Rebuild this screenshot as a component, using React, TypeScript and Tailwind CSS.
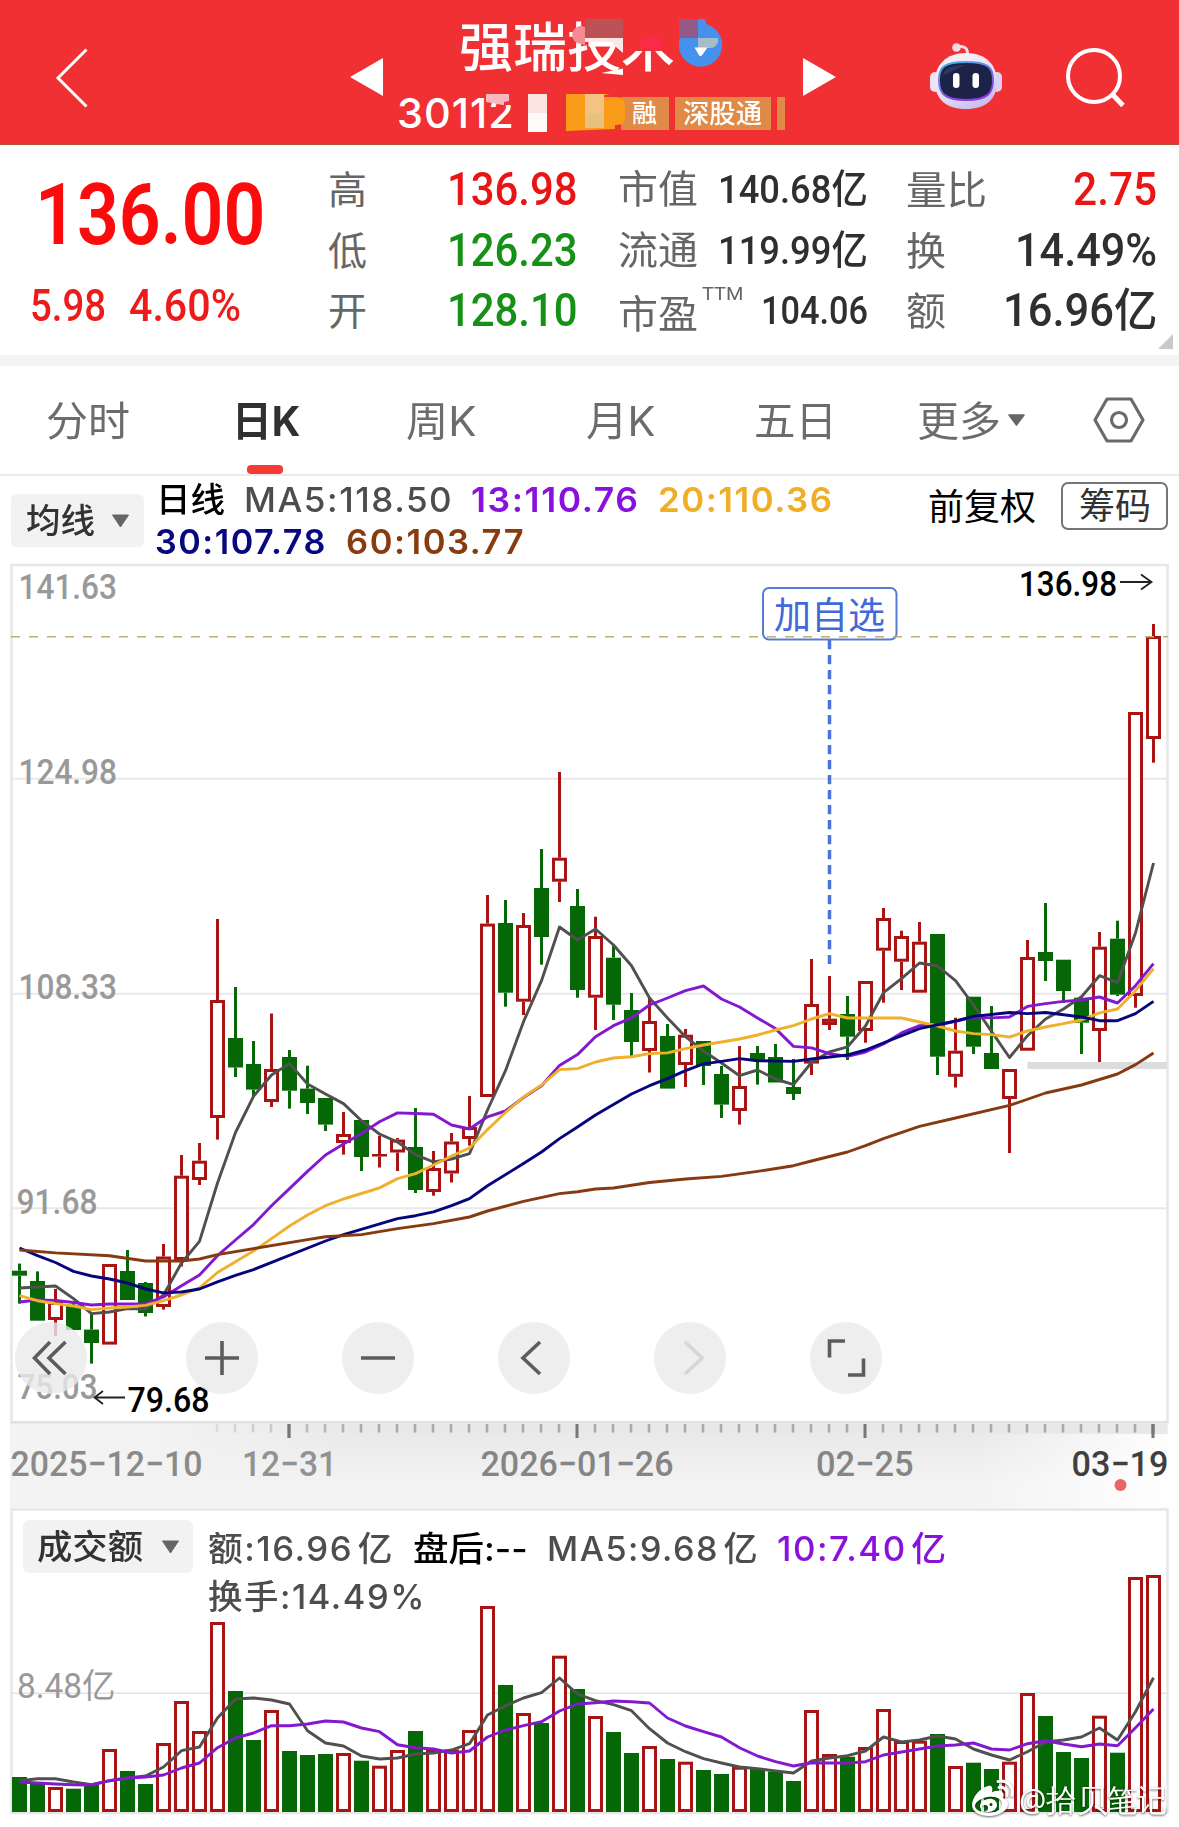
import { useLayoutEffect, useRef, type ReactNode } from "react";

/* Scales a single line of text horizontally so that it fills its column. */
function Fit({ className = "", children }: { className?: string; children: ReactNode }) {
  const box = useRef<HTMLDivElement>(null);
  const inner = useRef<HTMLSpanElement>(null);
  useLayoutEffect(() => {
    const b = box.current;
    const t = inner.current;
    if (b && t && t.offsetWidth > 0) {
      t.style.transform = `scaleX(${b.clientWidth / t.offsetWidth})`;
    }
  }, []);
  return (
    <div ref={box} className={`shrink-0 whitespace-nowrap ${className}`}>
      <span ref={inner} className="inline-block origin-left">
        {children}
      </span>
    </div>
  );
}

const DIN = "font-['Roboto','Noto_Sans_CJK_SC',sans-serif]";
const SF = "font-['Inter','Noto_Sans_CJK_SC',sans-serif]";

const RED = "#a81414";
const GREEN = "#056705";
const STEP = 18;
const X0 = 19.5;
const cx = (i: number) => X0 + STEP * i;

/* direction, high, body top, body bottom, low */
type Candle = [string, number, number, number, number];
const candles: Candle[] = [
  ["g", 1263.6, 1270.7, 1275.7, 1303.6], ["g", 1271.4, 1281, 1320.7, 1320.7], ["r", 1289, 1302, 1320, 1335.7],
  ["g", 1303, 1305.5, 1330, 1330], ["g", 1313.6, 1329.6, 1343, 1363.6], ["r", 1264, 1264, 1344.6, 1344.6],
  ["g", 1250, 1271, 1300, 1300], ["g", 1282, 1283, 1313, 1316.5], ["r", 1244, 1256.5, 1307, 1309.6],
  ["r", 1155, 1175.7, 1260, 1266.5], ["r", 1143, 1160.7, 1180, 1185], ["r", 919, 1000, 1118, 1139.6],
  ["g", 987, 1038, 1067.5, 1077], ["g", 1041, 1064, 1089.6, 1096], ["r", 1013.5, 1069, 1102, 1107],
  ["g", 1050, 1057, 1090.7, 1108.6], ["g", 1065.7, 1088.6, 1103, 1114], ["g", 1098, 1098, 1124.6, 1131],
  ["r", 1112, 1134, 1143, 1154.6], ["g", 1120, 1120, 1157, 1171], ["r", 1135.7, 1154, 1156.5, 1167.5],
  ["r", 1138, 1139.6, 1152.5, 1171], ["g", 1108, 1147, 1190, 1193], ["r", 1151, 1168, 1192, 1195.7],
  ["r", 1133, 1141.5, 1173.5, 1182.5], ["r", 1096, 1127, 1139, 1145.7], ["r", 895, 923.6, 1097, 1097],
  ["g", 900, 923, 992.7, 1006.7], ["r", 913, 925, 1001.7, 1015], ["g", 849, 888, 937, 964.7],
  ["r", 772, 857.7, 881.7, 902], ["g", 889, 906, 990, 997.7], ["r", 916.7, 936, 997.7, 1030],
  ["g", 946, 957.7, 1004.7, 1020], ["g", 993, 1010, 1042, 1057], ["r", 997, 1021, 1051, 1072.5],
  ["g", 1024, 1036, 1088.6, 1088.6], ["r", 1029, 1034.7, 1065, 1087], ["g", 1041, 1041, 1066, 1085],
  ["g", 1066, 1074, 1104.6, 1118], ["r", 1046, 1086, 1111, 1124.6], ["g", 1046, 1053, 1061, 1084.6],
  ["g", 1044, 1057, 1082.5, 1082.5], ["g", 1059, 1087, 1094, 1100], ["r", 959, 1004, 1063.6, 1075],
  ["r", 976, 1018.7, 1025, 1030], ["g", 996, 1014, 1036.7, 1060], ["r", 981, 981, 1031, 1042.7],
  ["r", 908, 918, 950.7, 1002.7], ["r", 930.7, 936, 961.7, 990], ["r", 922, 941.7, 992.7, 992.7],
  ["g", 934, 934, 1056.7, 1075], ["r", 1017.7, 1050.7, 1076.8, 1087.5], ["g", 996.7, 996.7, 1046.7, 1054],
  ["g", 1006, 1053, 1069, 1069], ["r", 1069, 1069, 1099, 1153], ["r", 940, 957, 1050.7, 1050.7],
  ["g", 903, 952, 961, 981], ["g", 959.7, 959.7, 991, 1003], ["g", 997.7, 997.7, 1022.7, 1054],
  ["r", 932, 946.7, 1031, 1062], ["g", 920.7, 938.7, 994.7, 996], ["r", 712, 712, 996, 1007.7],
  ["r", 624, 636, 739, 762.7],
];

const volumeTops = [
  1777, 1784, 1787, 1788.7, 1785, 1749, 1771, 1784, 1743, 1701, 1731, 1622, 1691, 1740, 1710, 1751, 1755, 1754, 1753,
  1760.7, 1765.7, 1750, 1731, 1749, 1749.5, 1730, 1606, 1685, 1713, 1723, 1655.7, 1689, 1716, 1732, 1753, 1746, 1759,
  1761.7, 1770, 1774, 1766.7, 1769, 1771.7, 1781, 1710, 1754, 1756.7, 1747, 1709, 1741, 1740.7, 1734, 1766, 1762.7,
  1769, 1761.7, 1693, 1716, 1752, 1758, 1715.7, 1752.7, 1577, 1575,
];

type Series = [number, number][];
const seq = (v: number[]): Series => v.map((y, i) => [i, y]);
const pts = (s: Series) => s.map(([i, y]) => `${cx(i)},${y}`).join(" ");

const ma5 = seq([
  1288, 1287, 1286, 1298.6, 1313.6, 1312, 1308.6, 1309, 1295, 1263, 1241.4, 1183, 1132.5, 1096.4, 1075, 1063.6, 1084,
  1094, 1103.6, 1120.7, 1134, 1142, 1154.6, 1162, 1159, 1153.6, 1110, 1070.7, 1021.7, 980.7, 927, 940, 929, 945, 965.7,
  998, 1018, 1036.7, 1051, 1063, 1075.7, 1070, 1079, 1084.6, 1062.5, 1051.8, 1046.8, 1026, 992.7, 978.7, 963, 966,
  980.7, 1005, 1031.4, 1057.5, 1035.7, 1019, 1009, 996.7, 975.7, 982.7, 933, 863,
]);
const ma13 = seq([
  1302, 1300, 1300.4, 1302.5, 1305, 1304, 1304, 1303.6, 1297, 1285.7, 1275, 1255.7, 1240, 1224.6, 1205.7, 1188.6,
  1171.4, 1155, 1144, 1133.6, 1121.8, 1112.9, 1113.5, 1114.3, 1125, 1129, 1116.8, 1111, 1097.5, 1085.7, 1065.4, 1054.6,
  1036.8, 1025.7, 1017.9, 1005, 998, 990.7, 986, 999, 1007, 1017.9, 1028.6, 1046.4, 1047.9, 1053.6, 1056.4, 1052, 1044,
  1032.9, 1025.7, 1025, 1021.4, 1017, 1017.9, 1017, 1006.4, 1003.6, 1001.4, 1000, 997, 1003, 985.7, 963.6,
]);
const ma20 = seq([
  1295.7, 1300.7, 1303.6, 1306, 1309.6, 1308, 1307, 1305.4, 1300.7, 1295, 1287.9, 1272.5, 1261.8, 1251, 1238.6, 1226,
  1215, 1205.7, 1199, 1193.5, 1187.9, 1178.6, 1173.6, 1165, 1156, 1148, 1129.6, 1112.5, 1097, 1085, 1069.6, 1068.6,
  1062, 1058, 1056.8, 1053.6, 1052.9, 1048.6, 1045, 1042, 1039, 1035, 1030, 1025.7, 1019, 1013.6, 1018, 1018, 1018,
  1018, 1022, 1026, 1031, 1033.6, 1034.6, 1037, 1031, 1027, 1023.6, 1020, 1012.9, 1009, 990.7, 968.6,
]);
const ma30: Series = [
  [0, 1248], [1, 1255.7], [2, 1262.5], [3, 1271.4], [4, 1276], [5, 1279], [6, 1283], [7, 1289], [8, 1292.9], [9, 1292],
  [10, 1289], [11, 1281.8], [12, 1275.4], [13, 1269.6], [17, 1241], [18, 1234.6], [21, 1218.6], [22, 1215.7],
  [23, 1211.8], [24, 1205.7], [25, 1198.6], [26, 1185.7], [28, 1163.6], [29, 1152], [30, 1138.6], [31, 1127],
  [32, 1115], [33, 1104.6], [34, 1094], [35, 1085.7], [36, 1078.6], [37, 1070.7], [38, 1063.9], [39, 1061.4],
  [40, 1058.6], [41, 1060.7], [43, 1061.4], [44, 1059], [46, 1055], [47, 1050], [50, 1028.6], [52, 1021], [53, 1016.4],
  [55, 1012.5], [56, 1013.6], [57, 1012.5], [59, 1017], [60, 1020.7], [61, 1020.7], [62, 1013.6], [63, 1001.4],
];
const ma60: Series = [
  [0, 1250], [2, 1252.9], [5, 1255.7], [7, 1261], [9, 1261], [10, 1259], [11, 1254.6], [16, 1239.6], [17, 1236.8],
  [19, 1234.6], [21, 1228.6], [23, 1223.6], [25, 1217], [26, 1211], [28, 1201.4], [30, 1193.6], [31, 1191.8],
  [32, 1189], [33, 1188], [35, 1182.5], [37, 1179], [39, 1176.4], [41, 1171.4], [43, 1165.7], [44, 1161], [46, 1152],
  [47, 1145.7], [48, 1138.6], [50, 1126.4], [52, 1118], [55, 1105.4], [57, 1093], [59, 1085], [61, 1074], [62, 1064.6],
  [63, 1053],
];
const vma5 = seq([
  1780.7, 1778.7, 1778.7, 1782, 1784.7, 1780.7, 1778, 1776, 1767, 1750.7, 1747, 1718, 1699, 1698, 1700, 1704, 1730.7,
  1743, 1746, 1756, 1759, 1758, 1754, 1753, 1750, 1743.7, 1715, 1705.7, 1698, 1692.7, 1678, 1694, 1700.7, 1704.7,
  1710.7, 1728.7, 1743, 1751.7, 1758.7, 1763, 1767, 1768.7, 1771, 1773, 1761, 1758, 1755.7, 1751, 1737, 1742, 1740,
  1736, 1739, 1749, 1755, 1760, 1751.7, 1742, 1740, 1737, 1728, 1740, 1711.7, 1677.7,
]);
const vma10 = seq([
  1782, 1783, 1784, 1784.7, 1785, 1780.7, 1778, 1777, 1775, 1768, 1763, 1747.7, 1738, 1733, 1725.7, 1725.7, 1724, 1721,
  1722, 1728, 1731.7, 1744.7, 1747.7, 1749, 1753, 1751, 1737, 1730, 1725.7, 1721.7, 1711, 1704, 1702.7, 1701, 1701.7,
  1703, 1718, 1726, 1731.7, 1737, 1747.7, 1756, 1761.7, 1766, 1762.7, 1763, 1763, 1761.7, 1755, 1752, 1749, 1746, 1745,
  1743, 1749, 1750, 1743.7, 1740.7, 1744, 1746.7, 1744, 1745.7, 1727.7, 1709,
]);

function Label(p: { x: number; y: number; w: number; fill: string; children: string; size?: number }) {
  return (
    <text
      x={p.x}
      y={p.y}
      textLength={p.w}
      lengthAdjust="spacingAndGlyphs"
      fill={p.fill}
      fontSize={p.size ?? 35.5}
      fontWeight={500}
    >
      {p.children}
    </text>
  );
}

function Line({ s, color }: { s: Series; color: string }) {
  return <polyline points={pts(s)} fill="none" stroke={color} strokeWidth={2.9} strokeLinejoin="round" />;
}

function PriceChart() {
  return (
    <svg className={`block ${DIN}`} width="1179" height="948" viewBox="0 560 1179 948">
      <defs>
        <linearGradient id="axisTop" x1="0" x2="0" y1="0" y2="1">
          <stop offset="0" stopColor="#e7e7e7" />
          <stop offset="1" stopColor="#f3f3f3" />
        </linearGradient>
        <linearGradient id="fadeRight" x1="0" x2="1" y1="0" y2="0">
          <stop offset="0" stopColor="#fff" stopOpacity="0" />
          <stop offset="1" stopColor="#fff" stopOpacity="1" />
        </linearGradient>
        <linearGradient id="fadeLeft" x1="0" x2="1" y1="0" y2="0">
          <stop offset="0" stopColor="#f3f3f3" stopOpacity="1" />
          <stop offset="0.4" stopColor="#f3f3f3" stopOpacity="1" />
          <stop offset="1" stopColor="#f3f3f3" stopOpacity="0" />
        </linearGradient>
      </defs>

      <rect x="11.5" y="565" width="1156" height="857" fill="#fff" stroke="#e6e6e6" strokeWidth="2.5" />
      {[778.7, 993.7, 1208.3].map((y) => (
        <line key={y} x1="12" x2="1167" y1={y} y2={y} stroke="#e9e9e9" strokeWidth="2" />
      ))}

      <g>
        <Label x={18.5} y={599} w={98.5} fill="#999">141.63</Label>
        <Label x={18.5} y={784} w={98.5} fill="#999">124.98</Label>
        <Label x={18.5} y={998.7} w={98.5} fill="#999">108.33</Label>
        <Label x={16.5} y={1213.6} w={81} fill="#999">91.68</Label>
        <Label x={17.5} y={1398.6} w={80} fill="#999">75.03</Label>
      </g>

      <rect x="1027.5" y="1062" width="139.5" height="7" fill="#dcdcdc" />

      <rect x="763" y="588" width="133.5" height="51.5" rx="6" fill="#fff" stroke="#5a7bd2" strokeWidth="2" />
      <text x="774" y="629" textLength="111" lengthAdjust="spacingAndGlyphs" fill="#4169d8" fontSize="37">加自选</text>
      <line x1="829.5" x2="829.5" y1="640" y2="964" stroke="#4a74dc" strokeWidth="3.5" strokeDasharray="9.3 5.7" />

      {candles.map(([d, hi, top, bot, lo], i) => {
        const x = cx(i);
        const c = d === "r" ? RED : GREEN;
        return (
          <g key={i} stroke={c}>
            {hi < top && <line x1={x} x2={x} y1={hi} y2={top} strokeWidth="3" />}
            {lo > bot && <line x1={x} x2={x} y1={bot} y2={lo} strokeWidth="3" />}
            {d === "g" || bot - top < 4 ? (
              <rect x={x - 7.5} y={top} width="15" height={bot - top} fill={c} stroke="none" />
            ) : (
              <rect
                x={x - 6}
                y={top + 1.5}
                width="12"
                height={bot - top - 3}
                fill={i === 45 ? "#f06060" : "#fff"}
                strokeWidth="3"
              />
            )}
          </g>
        );
      })}
      <line x1="11" x2="1168" y1="636.7" y2="636.7" stroke="#c0b06e" strokeWidth="1.6" strokeDasharray="9 9" />

      <Line s={ma5} color="#505050" />
      <Line s={ma13} color="#8318cf" />
      <Line s={ma20} color="#efb02c" />
      <Line s={ma30} color="#06067c" />
      <Line s={ma60} color="#853a12" />

      <Label x={1019} y={595.5} w={98} fill="#000">136.98</Label>
      <path d="M1120 582h31M1141 574.5l10.500 7.500l-10.500 7.500" fill="none" stroke="#222" strokeWidth="1.8" />
      <Label x={127.5} y={1411.5} w={82} fill="#000">79.68</Label>
      <path d="M125 1397.5H94.5M103 1391l-8.5 6.5l8.5 6.5" fill="none" stroke="#222" strokeWidth="1.8" />

      <rect x="10" y="1424" width="1157.5" height="84" fill="#f3f3f3" />
      <rect x="10" y="1424" width="1157.5" height="60" fill="url(#axisTop)" />
      {candles.map((_, i) =>
        i < 11 ? null : [15, 31, 47, 63].includes(i) ? (
          <line key={i} x1={cx(i) - 0.5} x2={cx(i) - 0.5} y1="1424" y2="1438" stroke="#777" strokeWidth="3" />
        ) : (
          <line key={i} x1={cx(i) - 0.5} x2={cx(i) - 0.5} y1="1424" y2="1432.5" stroke="#aaa" strokeWidth="2.6" />
        ),
      )}
      <rect x="10" y="1424" width="350" height="84" fill="url(#fadeLeft)" />
      <rect x="967" y="1434" width="212" height="74" fill="url(#fadeRight)" />
      <line x1={cx(15) - 0.5} x2={cx(15) - 0.5} y1="1424" y2="1438" stroke="#777" strokeWidth="3" />
      <line x1={cx(63) - 0.5} x2={cx(63) - 0.5} y1="1424" y2="1438" stroke="#777" strokeWidth="3" />
      <line x1="10" x2="1168" y1="1422.5" y2="1422.5" stroke="#e0e0e0" strokeWidth="2" />
      <Label x={10.5} y={1476} w={192} fill="#8a8a8a">2025−12−10</Label>
      <Label x={242} y={1475.5} w={95} fill="#929292">12−31</Label>
      <Label x={480.5} y={1475.5} w={193} fill="#858585">2026−01−26</Label>
      <Label x={816} y={1475.5} w={97.5} fill="#858585">02−25</Label>
      <Label x={1071.5} y={1475.5} w={97} fill="#3f3f3f">03−19</Label>
      <circle cx="1120.5" cy="1485" r="6" fill="#ea6464" />
    </svg>
  );
}

function VolumeChart() {
  return (
    <svg className={`absolute inset-0 ${DIN}`} width="1179" height="319" viewBox="0 1508 1179 319">
      <rect x="11.5" y="1509.5" width="1156" height="303.5" fill="#fff" stroke="#e6e6e6" strokeWidth="2.5" />
      <line x1="12" x2="1167" y1="1693.3" y2="1693.3" stroke="#e3e3e3" strokeWidth="1.4" />
      <text x="17" y="1698" textLength="98.5" lengthAdjust="spacingAndGlyphs" fill="#999" fontSize="34.5">8.48亿</text>
      {volumeTops.map((t, i) =>
        candles[i][0] === "g" ? (
          <rect key={i} x={cx(i) - 7.5} y={t} width="15" height={1812 - t} fill={GREEN} />
        ) : (
          <rect key={i} x={cx(i) - 6} y={t + 1.5} width="12" height={1812 - t - 3} fill="#fff" stroke={RED} strokeWidth="3" />
        ),
      )}
      <Line s={vma5} color="#505050" />
      <Line s={vma10} color="#8318cf" />
    </svg>
  );
}

function Watermark() {
  return (
    <div className="absolute right-[11px] bottom-[8px] flex items-center gap-[4px] text-white drop-shadow-[0_1px_1px_rgba(0,0,0,0.6)]">
      <svg width="44" height="40" viewBox="0 0 44 40">
        <path
          fill="#fff"
          fillRule="evenodd"
          d="M17 7C9 9 1 18 1 26c0 7 8 11 17 11 11 0 19-6 19-12 0-4-3-5-5-6 1-3 1-5-1-6-2-2-6-1-10 0 1-4 0-7-4-6zM17 18c8-1 14 2 14 7s-6 9-13 9-14-3-14-7 6-8 13-9z"
        />
        <path fill="#fff" fillRule="evenodd" d="M17 20c5-1 9 2 9 6s-4 7-9 7-8-3-8-6 3-6 8-7zm-3 6a3 3 0 100 6 3 3 0 000-6zm6-2a1.500 1.500 0 100 3 1.500 1.500 0 000-3z" />
        <path d="M28 8.500c5-1 9 3 8 8M27 2.500c9-2 16 5 14 14" fill="none" stroke="#fff" strokeWidth="3" strokeLinecap="round" />
      </svg>
      <Fit className="h-[38px] w-[149px] text-[31px] leading-[38px]">@拾贝笔记</Fit>
    </div>
  );
}

function Robot() {
  return (
    <svg className="ml-[93px]" width="74" height="68" viewBox="0 0 74 68">
      <defs>
        <linearGradient id="shell" x1="0.3" x2="0.8" y1="0" y2="1">
          <stop offset="0" stopColor="#fdf1f6" />
          <stop offset="0.55" stopColor="#e6ddf2" />
          <stop offset="1" stopColor="#c4b8f0" />
        </linearGradient>
        <linearGradient id="visorEdge" x1="0" x2="0.4" y1="0" y2="1">
          <stop offset="0" stopColor="#46b7ea" />
          <stop offset="1" stopColor="#8a3be8" />
        </linearGradient>
      </defs>
      <path d="M28 5c7-2 11 1 10.500 8" fill="none" stroke="#f3dfe8" strokeWidth="3" />
      <circle cx="27.500" cy="5.500" r="4.300" fill="#f9d9e2" />
      <rect x="1" y="30" width="10" height="20" rx="5" fill="#efe3f2" />
      <rect x="63" y="30" width="10" height="20" rx="5" fill="#ddd0f2" />
      <path d="M37 11c20 0 31 12 31 29S57 67 37 67 6 57 6 40s11-29 31-29z" fill="url(#shell)" />
      <path d="M37 20c22 0 27 5 27 18S59 58 37 58 10 51 10 38s5-18 27-18z" fill="#1d2347" stroke="url(#visorEdge)" strokeWidth="2" />
      <path d="M14 33c2-8 10-10 22-10-8 3-14 8-22 10z" fill="#2c3760" />
      <rect x="24" y="31" width="6.500" height="15" rx="3.200" fill="#fff" />
      <rect x="43.500" y="31" width="6.500" height="15" rx="3.200" fill="#fff" />
    </svg>
  );
}

function Header() {
  return (
    <header className="flex h-[145px] items-start border-b border-[#b5533f] bg-[#f13034]">
      <svg className="mt-[47px] ml-[54px]" width="36" height="62" viewBox="0 0 36 62">
        <path d="M32.500 2.500L4 31l28.500 28.500" fill="none" stroke="#fff" strokeWidth="3" />
      </svg>
      <svg className="mt-[58px] ml-[260px]" width="33" height="38" viewBox="0 0 33 38">
        <path d="M33 0v38L0 19z" fill="#fff" />
      </svg>

      <div className={`relative h-[144px] w-[420px] text-white ${SF}`}>
        <div className="ml-[76px] pt-[16px]">
          <Fit className="h-[64px] w-[216px] text-[53px] leading-[64px] font-medium">强瑞技术</Fit>
        </div>
        <div className="mt-[12px] ml-[14px] flex h-[42px] items-center">
          <Fit className="h-[42px] w-[118px] text-[41.5px] leading-[42px] font-medium tracking-[1px]">30112</Fit>
          <div className="mt-[1px] ml-[106px] flex h-[33px] gap-[6px] text-[26px] leading-[33px] font-medium">
            <div className="w-[48px] bg-[#e08a48] pl-[11px] text-[25px]">融</div>
            <div className="w-[96px] bg-[#e08a48] pl-[8px]">
              <Fit className="w-[79px]">深股通</Fit>
            </div>
            <div className="w-[8px] bg-[#e08a48]" />
          </div>
        </div>
        <svg className="absolute inset-0" width="420" height="144" viewBox="383 0 420 144">
          <rect x="623" y="17" width="56" height="34" fill="#f13034" />
          <rect x="641" y="38" width="21" height="12" fill="#fa2a48" />
          <path d="M585 27a8.500 8.500 0 00-8 16l8 2z" fill="#f78b93" />
          <rect x="585" y="19" width="38" height="19" fill="#bd5256" />
          <path d="M585 38h38v15l-7-6-4-5h-27z" fill="#fde7e6" />
          <path d="M601 73l22-4.500V75z" fill="#fff" />
          <circle cx="700.500" cy="45" r="21.700" fill="#4691ee" />
          <rect x="679" y="19" width="19" height="19" fill="#935987" />
          <path d="M698 19h7l2 8-9 1z" fill="#4691ee" />
          <path d="M698 38h20v4q-2 6-8 6h-12z" fill="#a5bcc9" />
          <path d="M694.500 47.500h13l-6 8.500h-2z" fill="#fff" />
          <path d="M486 94h23v10l-6 1-17-3z" fill="#f8b9c0" />
          <path d="M509 93h9v12l-14 0v-3l5-1z" fill="#f13034" />
          <rect x="528" y="94" width="19" height="19" fill="#fde4e1" />
          <rect x="528" y="113" width="19" height="19" fill="#fffafa" />
          <path d="M566 94h44l-14 3h20q8 0 9 8v15q-1 5-10 5v4l-49 2z" fill="#fb9c18" />
          <rect x="585" y="94" width="19" height="19" fill="#f4c384" />
          <rect x="585" y="113" width="19" height="15" fill="#e8c27d" />
        </svg>
      </div>

      <svg className="mt-[58px]" width="33" height="38" viewBox="0 0 33 38">
        <path d="M0 0v38l33-19z" fill="#fff" />
      </svg>
      <div className="mt-[42px] flex">
        <Robot />
      </div>
      <svg className="mt-[46px] ml-[61px]" width="62" height="64" viewBox="0 0 62 64">
        <circle cx="30" cy="30" r="26" fill="none" stroke="#fff" strokeWidth="4" />
        <path d="M48.500 48.500L59 59.500" stroke="#fff" strokeWidth="5" />
      </svg>
    </header>
  );
}

function Stats() {
  return (
    <section className={`relative flex h-[210px] bg-white font-medium text-[#2f2f2f] ${DIN}`}>
      <div className="w-[328px] pt-[23px] text-[#fb0b0b]">
        <Fit className="ml-[35px] h-[96px] w-[230px] text-[84.500px] leading-[96px] font-semibold">136.00</Fit>
        <div className="mt-[19px] flex h-[46px] text-[44.500px] leading-[46px] text-[#ec1c1c]">
          <Fit className="ml-[30px] w-[76px]">5.98</Fit>
          <Fit className="ml-[23px] w-[112px]">4.60%</Fit>
        </div>
      </div>

      <div className="grid w-[250px] grid-rows-[61px_60px_60px] pt-[14px] text-[46px] leading-[60px]">
        {[
          ["高", "136.98", "text-[#e91414]"],
          ["低", "126.23", "text-[#159215]"],
          ["开", "128.10", "text-[#159215]"],
        ].map(([k, v, c]) => (
          <div key={k} className="flex">
            <Fit className="mt-[2px] w-[39px] text-[39px] font-normal text-[#666]">{k}</Fit>
            <Fit className={`ml-[80px] w-[131px] ${c}`}>{v}</Fit>
          </div>
        ))}
      </div>

      <div className="ml-[40px] grid w-[250px] grid-rows-[61px_60px_60px] pt-[14px] leading-[61px]">
        <div className="flex">
          <Fit className="mt-[1px] w-[80px] text-[39px] font-normal text-[#666]">市值</Fit>
          <Fit className="ml-[20px] w-[150px] text-[39.500px]">140.68亿</Fit>
        </div>
        <div className="flex">
          <Fit className="mt-[1px] w-[80px] text-[39px] font-normal text-[#666]">流通</Fit>
          <Fit className="ml-[20px] w-[150px] text-[39.500px]">119.99亿</Fit>
        </div>
        <div className="flex">
          <Fit className="mt-[5px] w-[80px] text-[39px] font-normal text-[#666]">市盈</Fit>
          <Fit className="-mt-[17px] ml-[4px] w-[41px] text-[18px] font-normal text-[#666]">TTM</Fit>
          <Fit className="ml-[18px] w-[107px] text-[38.500px]">104.06</Fit>
        </div>
      </div>

      <div className="ml-[38px] grid w-[251px] grid-rows-[61px_60px_60px] pt-[14px] text-[46px] leading-[60px]">
        <div className="flex justify-between">
          <Fit className="mt-[2px] w-[81px] text-[39px] font-normal text-[#666]">量比</Fit>
          <Fit className="w-[84px] text-[#ea1515]">2.75</Fit>
        </div>
        <div className="flex justify-between">
          <Fit className="mt-[2px] w-[40px] text-[39px] font-normal text-[#666]">换</Fit>
          <Fit className="w-[142px]">14.49%</Fit>
        </div>
        <div className="flex justify-between">
          <Fit className="mt-[2px] w-[40px] text-[39px] font-normal text-[#666]">额</Fit>
          <Fit className="w-[154px]">16.96亿</Fit>
        </div>
      </div>
      <svg className="absolute right-[6px] bottom-[6px]" width="15" height="15" viewBox="0 0 15 15">
        <path d="M15 0v15H0z" fill="#c9c9c9" />
      </svg>
    </section>
  );
}

function Tabs() {
  return (
    <nav className={`flex h-[110px] items-start border-b-2 border-[#ebebeb] bg-white text-[41px] leading-[111px] text-[#6c6c6c] ${SF}`}>
      <Fit className="ml-[46px] w-[84px]">分时</Fit>
      <div className="relative ml-[102px] h-[108px]">
        <Fit className="w-[69px] font-bold text-[#303030]">日K</Fit>
        <div className="absolute bottom-0 left-[15px] h-[9px] w-[36px] rounded-[4px] bg-[#f63b33]" />
      </div>
      <Fit className="ml-[105px] w-[71px]">周K</Fit>
      <Fit className="ml-[109px] w-[70px]">月K</Fit>
      <Fit className="ml-[98px] w-[83px]">五日</Fit>
      <Fit className="ml-[80px] w-[84px]">更多</Fit>
      <svg className="mt-[48px] ml-[6px]" width="19" height="12" viewBox="0 0 19 12">
        <path d="M2 1h15l-7.500 10z" fill="#666" stroke="#666" strokeWidth="1.5" strokeLinejoin="round" />
      </svg>
      <svg className="mt-[30px] ml-[67px]" width="52" height="48" viewBox="0 0 52 48">
        <path d="M14 3h24l12 21-12 21H14L2 24z" fill="none" stroke="#6a6a6a" strokeWidth="3.2" strokeLinejoin="round" />
        <circle cx="26" cy="24" r="7.500" fill="none" stroke="#6a6a6a" strokeWidth="3.2" />
      </svg>
    </nav>
  );
}

function Caret() {
  return (
    <svg width="19" height="14" viewBox="0 0 19 14">
      <path d="M1.500 1h16l-8 12z" fill="#666" stroke="#666" strokeWidth="1" strokeLinejoin="round" />
    </svg>
  );
}

function MaBar() {
  return (
    <section className={`flex h-[84px] bg-white text-[34px] leading-[42px] font-medium ${SF}`}>
      <div className="mt-[18px] ml-[11px] flex h-[53px] w-[133px] items-center rounded-[6px] bg-[#f2f2f2] pl-[15px] text-[#333]">
        <Fit className="mr-[16px] w-[69px]">均线</Fit>
        <Caret />
      </div>
      <div className="ml-[12px] w-[740px] pt-[3px]">
        <div className="flex h-[42px] tracking-[1.500px]">
          <Fit className="w-[69px] tracking-normal text-black">日线</Fit>
          <Fit className="ml-[19px] w-[209px] text-[#4d4d4d]">MA5:118.50</Fit>
          <Fit className="ml-[18px] w-[169px] font-semibold text-[#8811dc]">13:110.76</Fit>
          <Fit className="ml-[18px] w-[176px] font-semibold text-[#efae25]">20:110.36</Fit>
        </div>
        <div className="flex h-[42px] font-semibold tracking-[1.500px]">
          <Fit className="-ml-[1px] w-[172px] text-[#080880]">30:107.78</Fit>
          <Fit className="ml-[19px] w-[179px] text-[#893b10]">60:103.77</Fit>
        </div>
      </div>
      <Fit className="mt-[9px] ml-[32px] w-[108px] text-[36px] leading-[44px] font-normal text-black">前复权</Fit>
      <div className="mt-[6px] ml-[25px] h-[48px] w-[107px] rounded-[7px] border-2 border-[#757575] pl-[16px] leading-[45px] font-normal text-[#333]">
        <Fit className="w-[72px] text-[36px]">筹码</Fit>
      </div>
    </section>
  );
}

const btnIcons: [string, string][] = [
  ["M35 20L19.500 36l15.500 16M50.500 20L34 36l16.500 16", "#5c5c5c"],
  ["M19 36h34M36 19v34", "#5c5c5c"],
  ["M19 36h34", "#5c5c5c"],
  ["M42 20L25 36l17 16", "#5c5c5c"],
  ["M31 20l17 16-17 16", "#d6d6d6"],
  ["M19.500 35.500V19H35M53.500 36.500V53H38", "#5c5c5c"],
];

function ChartButtons() {
  return (
    <div className="absolute top-[762px] left-[15px] flex">
      {btnIcons.map(([d, c], i) => (
        <div
          key={d}
          className={`flex h-[72px] w-[72px] items-center justify-center rounded-full bg-[#eaeaea]/80 ${i === 0 ? "" : i === 1 ? "ml-[99px]" : "ml-[84px]"}`}
        >
          <svg width="72" height="72" viewBox="0 0 72 72">
            <path d={d} fill="none" stroke={c} strokeWidth="3.6" />
          </svg>
        </div>
      ))}
    </div>
  );
}

export default function App() {
  return (
    <main className="h-[1827px] w-[1179px] overflow-hidden bg-white">
      <Header />
      <Stats />
      <div className="h-[11px] bg-[#f4f4f4]" />
      <Tabs />
      <MaBar />
      <section className="relative h-[948px]">
        <PriceChart />
        <ChartButtons />
      </section>
      <section className="relative h-[319px]">
        <VolumeChart />
        <div className={`relative flex pt-[12px] pl-[23px] text-[34px] leading-[48px] font-medium ${SF}`}>
          <div className="flex h-[53px] w-[170px] items-center rounded-[6px] bg-[#f2f2f2] pl-[14px] text-[#333]">
            <Fit className="mr-[18px] w-[106px]">成交额</Fit>
            <Caret />
          </div>
          <div className="ml-[15px] pt-[5px] tracking-[1.500px] text-[#4d4d4d]">
            <div className="flex h-[48px]">
              <Fit className="w-[186px]">额:16.96{"\u200a"}亿</Fit>
              <Fit className="ml-[19px] w-[115px] tracking-normal text-black">盘后:--</Fit>
              <Fit className="ml-[19px] w-[212px]">MA5:9.68{"\u200a"}亿</Fit>
              <Fit className="ml-[18px] w-[171px] text-[#8811dc]">10:7.40{"\u200a"}亿</Fit>
            </div>
            <Fit className="h-[48px] w-[218px]">换手:14.49%</Fit>
          </div>
        </div>
        <Watermark />
      </section>
    </main>
  );
}
